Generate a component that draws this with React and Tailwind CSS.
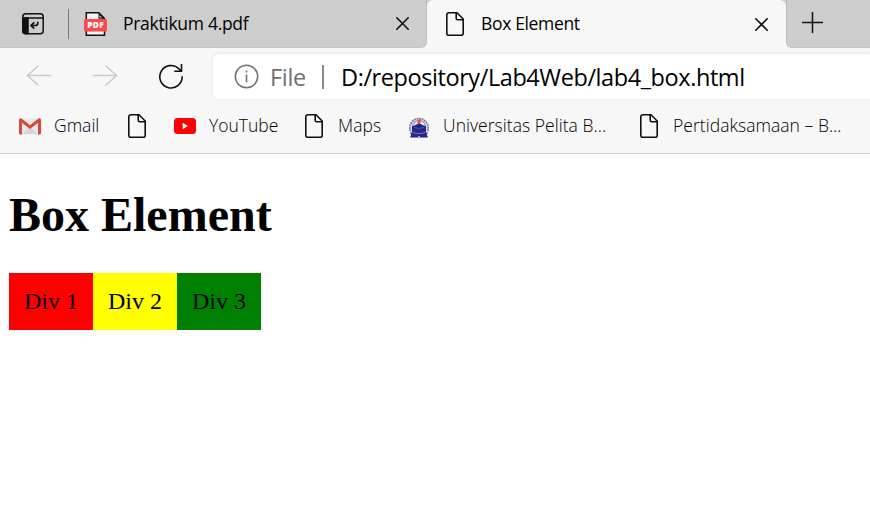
import React from "react";

function PageIcon({ className = "" }) {
  return (
    <svg className={"h-6 w-[18px] shrink-0 " + className} viewBox="0 0 18 24" fill="none" stroke="#111" strokeWidth="1.6" strokeLinejoin="round">
      <path d="M2.8.8H11L17.2 7v14.2a2 2 0 0 1-2 2H2.8a2 2 0 0 1-2-2V2.8a2 2 0 0 1 2-2Z" />
      <path d="M10.2.8v5.4a1.5 1.5 0 0 0 1.5 1.5h5.5" />
    </svg>
  );
}

function CloseIcon({ className = "" }) {
  return (
    <svg className={"size-[13px] shrink-0 " + className} viewBox="0 0 13 13" stroke="#111" strokeWidth="1.6" strokeLinecap="round">
      <path d="M.8.8l11.4 11.4M12.2.8.8 12.2" />
    </svg>
  );
}

function TabActionsIcon() {
  return (
    <svg className="ml-[22px] h-[22px] w-[22px] shrink-0" viewBox="0 0 22 22" fill="none" stroke="#111" strokeWidth="1.5">
      <rect x=".8" y=".8" width="20.4" height="19.9" rx="3" />
      <path d="M1 5h20" />
      <path d="M1 5h5v15.5H3.5A2.5 2.5 0 0 1 1 18Z" fill="#111" />
      <path d="M15.8 8.8v1.2q0 2.5-2.5 2.5H9.5M12.3 9.3 9 12.5l3.3 3.2" strokeWidth="1.7" />
    </svg>
  );
}

function PdfIcon() {
  return (
    <svg className="ml-[15px] h-6 w-[23px] shrink-0" viewBox="0 0 23 24">
      <path d="M2.3.8h12.5l5.7 5.7v16.8H2.3Z" fill="#f4f4f4" stroke="#111" strokeWidth="1.5" />
      <path d="M14.5.8v5.9h6.2Z" fill="#111" />
      <path d="M15.5 3.2v2.4h2.5Z" fill="#f4f4f4" />
      <rect y="7" width="23" height="12.5" rx="1.5" fill="#ff4747" />
      <text x="11.5" y="16.4" textAnchor="middle" textLength="16.5" fontFamily="Open Sans, sans-serif" fontWeight="800" fontSize="8.3" fill="#fff">PDF</text>
    </svg>
  );
}

function GmailIcon() {
  return (
    <svg className="ml-[19px] h-[17px] w-[22px] shrink-0" viewBox="0 0 22 17">
      <rect x=".5" y=".5" width="21" height="16" rx="1.5" fill="#e9e9e9" />
      <path d="M3 16 11 9l8 7Z" fill="#d5d5d5" />
      <path d="M0 2v13q0 1.5 1.5 1.5H3V2Z" fill="#d54b3d" />
      <path d="M22 2v13q0 1.5-1.5 1.5H19V2Z" fill="#d54b3d" />
      <path d="M1.6 1.8 11 9.2l9.4-7.4" fill="none" stroke="#d8493b" strokeWidth="3" strokeLinecap="round" />
    </svg>
  );
}

function YouTubeIcon() {
  return (
    <svg className="ml-7 h-4 w-[22px] shrink-0" viewBox="0 0 22 16">
      <rect width="22" height="16" rx="3.5" fill="#f00" />
      <path d="M8.7 4.8v6.4L14 8Z" fill="#fff" />
    </svg>
  );
}

function UniversityIcon() {
  return (
    <svg className="ml-[26px] h-[23px] w-[22px] shrink-0" viewBox="0 0 22 23">
      <path d="M2.6 16.5A9.2 9.2 0 1 1 19.4 16.5" fill="#dcdceb" stroke="#8082a8" strokeWidth="1.7" strokeDasharray="2 .6" />
      <path d="M4.5 12a6.5 6.5 0 1 1 13 0" fill="#f3eff5" stroke="#6a6ca0" strokeWidth=".9" />
      <path d="M11 8.3 4 11.6v6l7 1.6 7-1.6v-6Z" fill="#24268c" />
      <path d="M6 12.5q2.7 0 5 1.5 2.3-1.5 5-1.5" fill="none" stroke="#6f72b4" strokeWidth=".6" />
      <path d="M2 17.5h18l-1.2 2.3 1.2 2.7H2l1.2-2.7Z" fill="#23268d" />
      <path d="M4.5 17.6q6.5 2 13 0" fill="none" stroke="#9a9ccc" strokeWidth=".7" />
      <path d="m9.8 21.3 1.2 1.2 1.2-1.2Z" fill="#f7f7f7" />
      <path d="M11.8 3.5q1.5 3 .6 5.2h-2.7Q8.6 6.8 11.8 3.5Z" fill="#ef4545" />
    </svg>
  );
}

function TabStrip() {
  return (
    <div className="flex h-12 bg-[#f7f7f7]">
      <div className="flex h-12 w-[427px] items-center rounded-br-md border-r border-b border-r-[#bbb] border-b-[#c4c4c4] bg-[#cdcdcd]">
        <TabActionsIcon />
        <div className="ml-6 h-[30px] w-px bg-[#777]" />
        <PdfIcon />
        <span className="ml-4 w-[273px] text-[17.5px] tracking-[-0.3px]">Praktikum 4.pdf</span>
        <CloseIcon />
      </div>
      <div className="flex h-12 w-[359px] items-center bg-[#cdcdcd]">
        <div className="flex h-full w-full items-center rounded-t-md bg-[#f7f7f7]">
          <PageIcon className="ml-[19px]" />
          <span className="ml-[17px] w-[274px] pb-px text-[17.5px] tracking-[-0.35px]">Box Element</span>
          <CloseIcon />
        </div>
      </div>
      <div className="flex h-12 grow rounded-bl-md border-b border-l border-b-[#c4c4c4] border-l-[#bbb] bg-[#cdcdcd] pt-3 pl-[15px]">
        <svg className="size-[21px]" viewBox="0 0 21 21" stroke="#111" strokeWidth="1.5"><path d="M10.5 0v21M0 10.5h21" /></svg>
      </div>
    </div>
  );
}

function Toolbar() {
  return (
    <div className="flex h-[57px] items-start pt-1.5">
      <svg className="mt-[11px] ml-[26px] h-[22px] w-[25px] shrink-0" viewBox="0 0 25 22" fill="none" stroke="#c9c9c9" strokeWidth="1.5"><path d="M25 10.5H1.5M12.5.5l-11 10 11 10" /></svg>
      <svg className="mt-[11px] ml-[42px] h-[22px] w-[25px] shrink-0" viewBox="0 0 25 22" fill="none" stroke="#c9c9c9" strokeWidth="1.5"><path d="M0 10.5h23.5M12.5.5l11 10-11 10" /></svg>
      <svg className="mt-2.5 ml-[41px] size-[25px] shrink-0" viewBox="0 0 25 25" fill="none" stroke="#111" strokeWidth="1.6"><path d="M23.2 12.2a11.2 11.2 0 1 1-3.3-7.4l2 2.2M22.5 0v7.2h-7.2" /></svg>
      <div className="ml-[29px] flex h-[45px] grow items-center rounded-l-md bg-white shadow-[0_0_4px_rgba(0,0,0,0.09)]">
        <svg className="ml-[21px] size-[25px] shrink-0" viewBox="0 0 25 25" fill="none" stroke="#707070" strokeWidth="1.5"><circle cx="12.5" cy="12.5" r="11.2" /><path d="M12.5 10.5v7.8M12.5 6.5v2" strokeWidth="1.6" /></svg>
        <span className="ml-[11px] w-[52px] shrink-0 pt-0.5 text-[23.5px] tracking-[-0.3px] text-[#707070]">File</span>
        <div className="h-6 w-[1.5px] bg-[#888]" />
        <span className="ml-[17.5px] pt-0.5 text-[23.5px] tracking-[-0.42px]">D:/repository/Lab4Web/lab4_box.html</span>
      </div>
    </div>
  );
}

function Bookmarks() {
  return (
    <div className="flex h-[49px] items-center border-b border-[#cdcdcd] pb-1.5 text-[17.5px] font-[350] [&>span]:pb-px">
      <GmailIcon />
      <span className="ml-[13px] w-[46px]">Gmail</span>
      <PageIcon className="ml-7" />
      <YouTubeIcon />
      <span className="ml-[13px] w-[69px]">YouTube</span>
      <PageIcon className="ml-[27px]" />
      <span className="ml-[15px] w-[44px] tracking-[0.1px]">Maps</span>
      <UniversityIcon />
      <span className="ml-[13px] w-[163px] tracking-[0.04px]">Universitas Pelita B...</span>
      <PageIcon className="ml-[34px]" />
      <span className="ml-[15px] tracking-[0.04px]">Pertidaksamaan – B...</span>
    </div>
  );
}

export default function App() {
  return (
    <div className="h-[522px] w-[870px] overflow-hidden bg-white">
      <header className="bg-[#f7f7f7] font-['Open_Sans',sans-serif] font-normal whitespace-nowrap text-black">
        <TabStrip />
        <Toolbar />
        <Bookmarks />
      </header>
      <main className="pt-[33px] pl-[9px] font-['Liberation_Serif',serif] text-black">
        <h1 className="text-[48px] leading-[56px] font-bold">Box Element</h1>
        <div className="mt-[30px] flex text-2xl leading-[27px]">
          <div className="bg-[#ff0000] p-[15px]">Div 1</div>
          <div className="bg-[#ffff00] p-[15px]">Div 2</div>
          <div className="bg-[#008000] p-[15px]">Div 3</div>
        </div>
      </main>
    </div>
  );
}
